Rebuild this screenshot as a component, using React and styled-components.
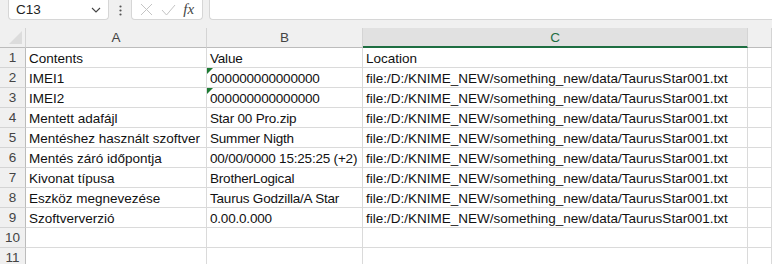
import React from 'react'
import styled, { createGlobalStyle } from 'styled-components'

const GlobalStyle = createGlobalStyle`
  html, body {
    margin: 0;
    padding: 0;
    background: #ffffff;
    font-family: "Liberation Sans", Arial, sans-serif;
    overflow: hidden;
  }
`

const Sheet = styled.div`
  width: 772px;
  height: 264px;
  display: flex;
  flex-direction: column;
  overflow: hidden;
`

const FormulaBar = styled.div`
  height: 28px;
  flex-shrink: 0;
  background: #f0f0f0;
  display: flex;
  align-items: flex-start;
  padding-left: 8px;
  box-sizing: border-box;
`

const Box = styled.div`
  height: 20px;
  background: #ffffff;
  border: 1px solid #d6d6d6;
  border-top: none;
  border-radius: 0 0 4px 4px;
  box-sizing: border-box;
  display: flex;
  align-items: center;
`

const NameBox = styled(Box)`
  width: 101px;
  padding: 0 7px;
  justify-content: space-between;
  font-size: 13.5px;
  color: #222;
`

const Dots = styled.div`
  width: 22px;
  height: 20px;
  display: flex;
  align-items: center;
  justify-content: center;
`

const ActionBox = styled(Box)`
  width: 72px;
  justify-content: space-around;
  padding: 0 4px;
`

const Fx = styled.span`
  font-family: "Liberation Serif", serif;
  font-style: italic;
  font-size: 15px;
  color: #444;
`

const FormulaInput = styled(Box)`
  flex: 1;
  margin-left: 6px;
  border-right: none;
  border-radius: 0 0 0 4px;
`

const Grid = styled.div`
  flex-shrink: 0;
  display: grid;
  grid-template-columns: 26px 181px 156px 385px 1fr;
  grid-auto-rows: 20px;
  grid-template-rows: 20px;
`

const Corner = styled.div`
  background: #f0f0f0;
  border-right: 1px solid #d4d4d4;
  border-bottom: 1px solid #bcbcbc;
  position: relative;
  &::after {
    content: '';
    position: absolute;
    right: 3px;
    bottom: 3px;
    width: 0;
    height: 0;
    border-left: 13px solid transparent;
    border-bottom: 13px solid #dcdcdc;
  }
`

const ColHead = styled.div`
  background: ${p => (p.$active ? '#e1e1e1' : '#f0f0f0')};
  border-right: 1px solid #d4d4d4;
  border-bottom: ${p => (p.$active ? '2px solid #1e6e42' : '1px solid #bcbcbc')};
  color: ${p => (p.$active ? '#1e6e42' : '#444')};
  font-size: 13.5px;
  display: flex;
  align-items: center;
  justify-content: center;
  box-sizing: border-box;
  padding-top: ${p => (p.$active ? '1px' : '0')};
`

const RowHead = styled.div`
  background: #f0f0f0;
  border-right: 1px solid #bcbcbc;
  border-bottom: 1px solid #d4d4d4;
  color: #444;
  font-size: 13.5px;
  display: flex;
  align-items: center;
  justify-content: center;
`

const Cell = styled.div`
  border-right: 1px solid #dadada;
  border-bottom: 1px solid #dadada;
  font-size: 13.5px;
  color: #111;
  padding: 1px 3px 0;
  white-space: nowrap;
  overflow: hidden;
  display: flex;
  align-items: center;
  position: relative;
  letter-spacing: ${p => (p.$tight ? '-0.2px' : 'normal')};
  ${p => p.$flag && `
    &::before {
      content: '';
      position: absolute;
      left: 0;
      top: 0;
      border-top: 6px solid #1e7b34;
      border-right: 6px solid transparent;
    }
  `}
`

const PATH = 'file:/D:/KNIME_NEW/something_new/data/TaurusStar001.txt'

const rows = [
  ['Contents', 'Value', 'Location'],
  ['IMEI1', '000000000000000', PATH, true],
  ['IMEI2', '000000000000000', PATH, true],
  ['Mentett adafájl', 'Star 00 Pro.zip', PATH],
  ['Mentéshez használt szoftver', 'Summer Nigth', PATH],
  ['Mentés záró időpontja', '00/00/0000 15:25:25 (+2)', PATH],
  ['Kivonat típusa', 'BrotherLogical', PATH],
  ['Eszköz megnevezése', 'Taurus Godzilla/A Star', PATH],
  ['Szoftververzió', '0.00.0.000', PATH],
  ['', '', ''],
  ['', '', '']
]

export default function App () {
  return (
    <>
      <GlobalStyle />
      <Sheet>
        <FormulaBar>
          <NameBox>
            <span>C13</span>
            <svg width='10' height='6' viewBox='0 0 10 6'>
              <path d='M1 1l4 4 4-4' fill='none' stroke='#444' strokeWidth='1.1' />
            </svg>
          </NameBox>
          <Dots>
            <svg width='3' height='11' viewBox='0 0 3 11'>
              <circle cx='1.5' cy='1.5' r='1.1' fill='#555' />
              <circle cx='1.5' cy='5.5' r='1.1' fill='#555' />
              <circle cx='1.5' cy='9.5' r='1.1' fill='#555' />
            </svg>
          </Dots>
          <ActionBox>
            <svg width='13' height='13' viewBox='0 0 13 13'>
              <path d='M1 1l11 11M12 1L1 12' stroke='#c4c4c4' strokeWidth='1' />
            </svg>
            <svg width='15' height='12' viewBox='0 0 15 12'>
              <path d='M1 6l4.5 5L14 1' fill='none' stroke='#c4c4c4' strokeWidth='1' />
            </svg>
            <Fx>fx</Fx>
          </ActionBox>
          <FormulaInput />
        </FormulaBar>
        <Grid>
          <Corner />
          <ColHead>A</ColHead>
          <ColHead>B</ColHead>
          <ColHead $active>C</ColHead>
          <ColHead />
          {rows.map((r, i) => (
            <React.Fragment key={i}>
              <RowHead>{i + 1}</RowHead>
              <Cell>{r[0]}</Cell>
              <Cell $flag={r[3]} $tight>{r[1]}</Cell>
              <Cell>{r[2]}</Cell>
              <Cell />
            </React.Fragment>
          ))}
        </Grid>
      </Sheet>
    </>
  )
}
